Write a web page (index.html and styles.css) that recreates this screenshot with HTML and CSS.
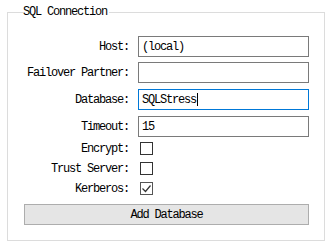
FILE: index.html
```html
<!DOCTYPE html>
<html lang="en">
<head>
  <meta charset="UTF-8" />
  <title>SQL Connection</title>
  <link rel="stylesheet" href="styles.css">
</head>
<body>

  <fieldset class="conn-box">
    <legend>SQL Connection</legend>

    <div class="row">
      <label for="host">Host:</label>
      <input type="text" id="host" value="(local)" />
    </div>

    <div class="row">
      <label for="partner">Failover Partner:</label>
      <input type="text" id="partner" />
    </div>

    <div class="row gap-6">
      <label for="database">Database:</label>
      <div class="field focused" id="database">SQLStress<span class="caret"></span></div>
    </div>

    <div class="row gap-6">
      <label for="timeout">Timeout:</label>
      <input type="text" id="timeout" value="15" />
    </div>

    <div class="row check-row">
      <label>Encrypt:</label>
      <span class="check"></span>
    </div>

    <div class="row check-row gap-7">
      <label>Trust Server:</label>
      <span class="check"></span>
    </div>

    <div class="row check-row gap-7">
      <label>Kerberos:</label>
      <span class="check checked">
        <svg width="11" height="11" viewBox="0 0 11 11">
          <path d="M1.5 5.5 L4.5 8.5 L9.5 2.5" fill="none" stroke="#333" stroke-width="1.2"/>
        </svg>
      </span>
    </div>

    <button type="button">Add Database</button>
  </fieldset>

</body>
</html>
```

FILE: styles.css
```css
* {
  box-sizing: border-box;
}

body {
  margin: 0;
  padding: 5px 8px 0 7px;
  background: #fff;
  font-family: 'Liberation Mono', 'DejaVu Sans Mono', monospace;
  font-size: 12px;
  letter-spacing: -1.2px;
  color: #000;
}

.conn-box {
  margin: 0;
  width: 318px;
  height: 236px;
  padding: 17px 15px 0 16px;
  border: 1px solid #dcdcdc;
}

.conn-box legend {
  margin-left: -1px;
  padding: 0 2px 0 0;
  line-height: 14px;
}

.row {
  display: flex;
  align-items: center;
  margin-top: 5px;
}

.row:first-of-type {
  margin-top: 0;
}

.row.gap-6 {
  margin-top: 6px;
}

.row.gap-7 {
  margin-top: 7px;
}

.row label {
  width: 106px;
  padding-right: 1px;
  text-align: right;
}

.row input,
.field {
  margin-left: 8px;
  width: 171px;
  height: 21px;
  padding: 0 3px;
  border: 1px solid #7a7a7a;
  font-family: inherit;
  font-size: 12px;
  letter-spacing: -1.2px;
  color: #000;
  outline: none;
  display: flex;
  align-items: center;
}

.field.focused {
  border-color: #0078d7;
}

.caret {
  display: inline-block;
  width: 1px;
  height: 13px;
  margin-left: 1px;
  background: #000;
}

.check-row {
  height: 13px;
}

.check {
  margin-left: 10px;
  width: 13px;
  height: 13px;
  border: 1px solid #333;
  background: #fff;
  display: flex;
  align-items: center;
  justify-content: center;
}

.check.checked {
  border-color: #555;
}

button {
  display: block;
  margin-top: 9px;
  width: 285px;
  height: 21px;
  padding: 0;
  background: #e5e5e5;
  border: 1px solid #adadad;
  font-family: inherit;
  font-size: 12px;
  letter-spacing: -1.2px;
  color: #000;
}
```
